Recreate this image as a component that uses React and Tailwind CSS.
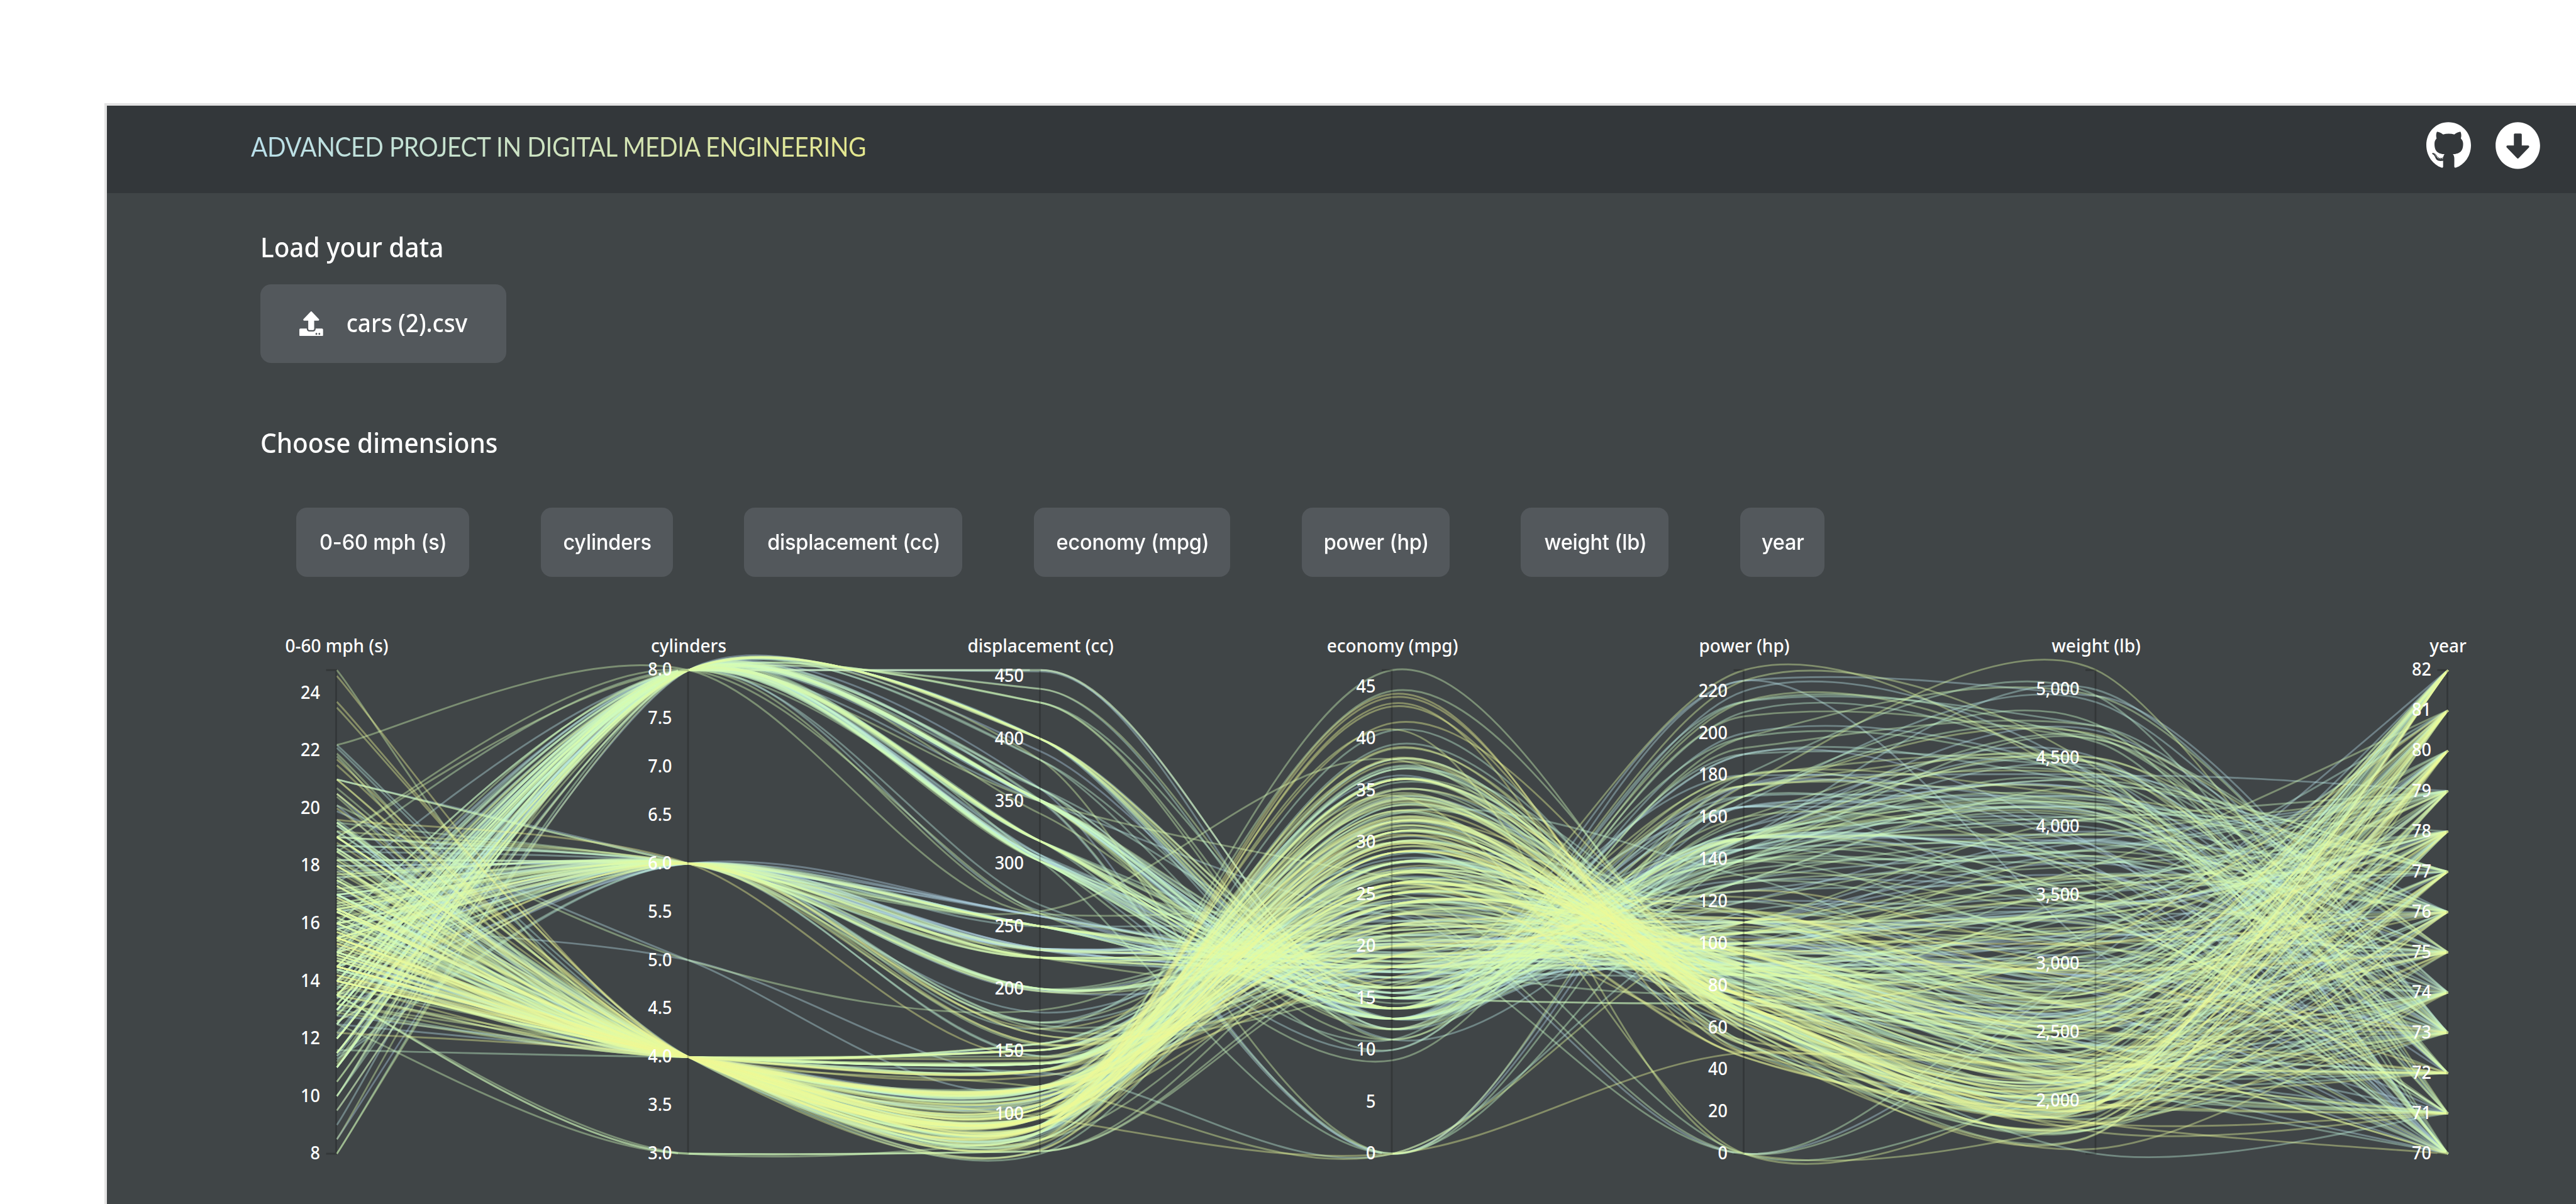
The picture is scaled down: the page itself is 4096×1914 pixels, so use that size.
import React from "react";
import { FaGithub, FaUpload, FaArrowAltCircleDown } from "react-icons/fa";

// Records per model year. Each one: make code + economy, cylinders,
// displacement, power, weight, 0-60 time. Unknown readings are stored as 0.
const CARS = {
  70: "f18 8 307 130 3504 12,d15 8 350 165 3693 11.5,v18 8 318 150 3436 11,a16 8 304 150 3433 12,l17 8 302 140 3449 10.5,l15 8 429 198 4341 10,f14 8 454 220 4354 9,v14 8 440 215 4312 8.5,w14 8 455 225 4425 10,a15 8 390 190 3850 8.5,h0 4 133 115 3090 17.5,f0 8 350 165 4142 11.5,l0 8 351 153 4034 11,v0 8 383 175 4166 10.5,a0 8 360 175 3850 11,l0 8 302 140 3353 8,j15 8 383 170 3563 10,v14 8 340 160 3609 8,f15 8 400 150 3761 9.5,d14 8 455 225 3086 10,A24 4 113 95 2372 15,v22 6 198 95 2833 15.5,a18 6 199 97 2774 15.5,l21 6 200 85 2587 16,i27 4 97 88 2130 14.5,C26 4 97 46 1835 20.5,u25 4 110 87 2672 17.5,b24 4 107 90 2430 14.5,y25 4 104 95 2375 17.5,c26 4 121 113 2234 12.5,a21 6 199 90 2648 15,l10 8 360 215 4615 14,f10 8 307 200 4376 15,j11 8 318 210 4382 13.5,m9 8 304 193 4732 18.5",
  71: "i27 4 97 88 2130 14.5,f28 4 140 90 2264 15.5,A25 4 113 95 2228 14,l25 4 98 0 2046 19,C0 4 97 48 1978 20,a19 6 232 100 2634 13,v16 6 225 105 3439 15.5,f17 6 250 100 3329 15.5,l19 6 250 88 3302 15.5,a18 6 232 100 3288 15.5,f14 8 350 165 4209 12,w14 8 400 175 4464 11.5,l14 8 351 153 4154 13.5,v14 8 318 150 4096 13,j12 8 383 180 4955 11.5,l13 8 400 170 4746 12,w13 8 400 175 5140 12,a18 6 258 110 2962 13.5,f22 4 140 72 2408 19,w19 6 250 100 3282 15,l18 6 250 88 3139 14.5,q23 4 122 86 2220 14,t28 4 116 90 2123 14,u30 4 79 70 2074 19.5,k30 4 88 76 2065 14.5,A31 4 71 65 1773 19,i35 4 72 69 1613 18,C27 4 97 60 1834 19,v26 4 91 70 1955 20.5",
  72: "A24 4 113 95 2278 15.5,j25 4 97.5 80 2126 17,C23 4 97 54 2254 23.5,f20 4 140 90 2408 19.5,l21 4 122 86 2226 16.5,f13 8 350 165 4274 12,w14 8 400 175 4385 12,v15 8 318 150 4135 13.5,l14 8 351 153 4129 13,a17 8 304 150 3672 11.5,q11 8 429 208 4633 11,d13 8 350 155 4502 13.5,s12 8 350 160 4456 13.5,g13 8 400 190 4422 12.5,o19 3 70 97 2330 13.5,a15 8 304 150 3892 12.5,f13 8 307 130 4098 14,l13 8 302 140 4294 16,v14 8 318 150 4077 14,D18 4 121 112 2933 14.5,C22 4 121 76 2511 18,u21 4 120 87 2979 19.5,x26 4 96 69 2189 18,l22 4 122 86 2395 16,i28 4 97 92 2288 17,A23 4 120 97 2506 14.5,j28 4 98 80 2164 15,A27 4 97 88 2100 16.5",
  73: "d13 8 350 175 4100 13,a14 8 304 150 3672 11.5,f13 8 350 145 3988 13,l14 8 302 137 4042 14.5,j15 8 318 150 3777 12.5,q12 8 429 198 4952 11.5,f13 8 400 150 4464 12,l13 8 351 158 4363 13,v14 8 318 150 4237 14.5,g13 8 440 215 4735 11,d12 8 455 225 4951 11,a13 8 360 175 3821 11,v18 6 225 105 3121 16.5,f16 6 250 100 3278 18,a18 6 232 100 2945 16,l18 6 250 88 3021 16.5,a23 6 198 95 2904 16,C26 4 97 46 1950 21,f11 8 400 150 4997 14,f12 8 400 167 4906 12.5,l13 8 360 170 4654 13,v12 8 350 180 4499 12.5,a18 6 232 100 2789 15,A20 4 97 88 2279 19,f21 4 140 72 2401 19.5,i22 4 108 94 2379 16.5,o18 3 70 90 2124 13.5,l19 4 122 85 2310 18.5,q21 6 155 107 2472 14,k26 4 98 90 2265 15.5,f15 8 350 145 4082 13,w16 8 400 230 4278 9.5,k29 4 68 49 1867 19.5,t24 4 116 75 2158 15.5,b20 4 114 91 2582 14,D19 4 121 112 2868 15.5,j15 8 318 150 3399 11,y24 4 121 110 2660 14,A20 6 156 122 2807 13.5,s11 8 350 180 3664 11",
  74: "v20 6 198 95 3102 16.5,l21 6 200 0 2875 17,a19 6 232 100 2901 16,f15 6 250 100 3336 17,i31 4 79 67 1950 19,l26 4 122 80 2451 16.5,A32 4 71 65 1836 21,f25 4 140 75 2542 17,f16 6 250 100 3781 17,a16 6 258 110 3632 18,v18 6 225 105 3613 16.5,l16 8 302 140 4141 14,d13 8 350 150 4699 14.5,j14 8 318 150 4457 13.5,l14 8 302 140 4638 16,a14 8 304 150 4257 15.5,b29 4 98 83 2219 16.5,C26 4 79 67 1963 15.5,t26 4 97 78 2300 14.5,A31 4 76 52 1649 16.5,i32 4 83 61 2003 19,j28 4 90 75 2125 14.5,k24 4 90 75 2108 15.5,k26 4 116 75 2246 14,n24 4 120 97 2489 15,z26 4 108 93 2391 15.5,k31 4 79 67 2000 16",
  75: "v19 6 225 95 3264 16,w18 6 250 105 3459 16,q15 6 250 72 3432 21,l15 6 250 72 3158 19.5,w16 8 400 170 4668 11.5,f15 8 350 145 4440 14,v16 8 318 150 4498 14.5,l14 8 351 148 4657 13.5,d17 6 231 110 3907 21,f16 6 250 105 3897 18.5,a15 6 258 110 3730 19,v18 6 225 95 3785 19,d21 6 231 110 3039 15,f20 8 262 110 3221 13.5,l13 8 302 129 3169 12,A29 4 97 75 2171 16,f23 4 140 83 2639 17,a20 6 232 100 2914 16,w23 4 140 78 2592 18.5,A24 4 134 96 2702 13.5,C25 4 90 71 2223 16.5,i24 4 119 97 2545 17,l18 6 171 97 2984 14.5,C29 4 90 70 1937 14,a19 6 232 90 3211 17,b23 4 115 95 2694 15,u23 4 120 88 2957 17,D22 4 121 98 2945 14.5,y25 4 121 115 2671 13.5,n33 4 91 53 1795 17.5",
  76: "k28 4 107 86 2464 15.5,t25 4 116 81 2220 16.9,e25 4 140 92 2572 14.9,x27 4 101 83 2202 15.3,f17.5 8 305 140 4215 13,j16 8 318 150 4190 13,a15.5 8 304 120 3962 13.9,l14.5 8 351 152 4215 12.8,v22 6 225 100 3233 15.4,f22 6 250 105 3353 14.5,l24 6 200 81 3012 17.6,a22.5 6 232 90 3085 17.6,f29 4 85 52 2035 22.2,f24.5 4 98 60 2164 22.1,C29 4 90 70 1937 14.2,n33 4 91 53 1795 17.4,j20 6 225 100 3651 17.7,l18 6 250 78 3574 21,w18.5 6 250 110 3645 16.2,a17.5 6 258 95 3193 17.8,C29.5 4 97 71 1825 12.2,A28 4 97 75 2155 16.4,i32 4 85 70 1990 17,l26.5 4 140 72 2565 13.6,D20 4 130 102 3150 15.7,v13 8 318 150 3940 13.2,u19 4 120 88 3270 21.9,A19 6 156 108 2930 15.5,p16.5 6 168 120 3820 16.7,e16.5 8 350 180 4380 12.1,f13 8 350 145 4055 12,l13 8 302 130 3870 15,j13 8 318 150 3755 14",
  77: "n31.5 4 98 68 2045 18.5,d30 4 111 80 2155 14.8,x36 4 79 58 1825 18.6,v25.5 4 122 96 2300 15.5,i33.5 4 85 70 1945 16.8,f17.5 8 305 145 3880 12.5,s17 8 260 110 4060 19,j15.5 8 318 145 4140 13.7,q15 8 302 130 4295 14.9,f17.5 6 250 110 3520 16.4,d20.5 6 231 105 3425 16.9,v19 6 225 100 3630 17.7,l18.5 6 250 98 3525 19,w16 8 400 180 4220 11.1,f15.5 8 350 170 4165 11.4,g15.5 8 400 190 4325 12.2,l16 8 351 149 4335 14.5,C29 4 97 78 1940 14.5,w24.5 4 151 88 2740 16,A26 4 97 75 2265 18.2,l25.5 4 140 89 2755 15.8,f30.5 4 98 63 2051 17,j33.5 4 98 83 2075 15.9,z30 4 97 67 1985 16.4,C30.5 4 97 78 2190 14.1,i22 6 146 97 2815 14.5,c21.5 4 121 110 2600 12.8,o21.5 3 80 110 2720 13.5",
  78: "C43.1 4 90 48 1985 21.5,l36.1 4 98 66 1800 14.4,o32.8 4 78 52 1985 19.4,i39.4 4 85 70 2070 18.6,n36.1 4 91 60 1800 16.4,s19.9 8 260 110 3365 15.5,j19.4 8 318 140 3735 13.2,q20.2 8 302 139 3570 12.8,w19.2 6 231 105 3535 19.2,f20.5 6 200 95 3155 18.2,l20.2 6 200 85 2965 15.8,l25.1 4 140 88 2720 15.4,v20.5 6 225 100 3430 17.2,a19.4 6 232 90 3210 17.2,d20.6 6 231 105 3380 15.8,q20.8 6 200 85 3070 16.7,j18.6 6 225 110 3620 18.7,a18.1 6 258 120 3410 15.1,f19.2 8 305 145 3425 13.2,d17.7 6 231 165 3445 13.4,l18.1 8 302 139 3205 11.2,j17.5 8 318 140 4080 13.7,f30 4 98 68 2155 16.5,A27.5 4 134 95 2560 14.2,i27.2 4 119 97 2300 14.7,j30.9 4 105 75 2230 14.5,A21.1 4 134 95 2515 14.8,v23.2 4 156 105 2745 16.7,s23.8 4 151 85 2855 17.6,i23.9 4 119 97 2405 14.9,b20.3 5 131 103 2830 15.9,D17 6 163 125 3140 13.6,y21.6 4 121 115 2795 15.7,u16.2 6 163 133 3410 15.8,C31.5 4 89 71 1990 14.9,n29.5 4 98 68 2135 16.6",
  79: "w21.5 6 231 115 3245 15.4,q19.8 6 200 85 2990 18.2,l22.3 4 140 88 2890 17.3,a20.2 6 232 90 3265 18.2,v20.6 6 225 110 3360 16.6,f17 8 305 130 3840 15.4,l17.6 8 302 129 3725 13.4,j18.2 8 318 135 3830 15.2,q16.5 8 351 138 3955 13.2,g18.5 8 360 150 3940 13,d16.9 8 350 155 4360 14.9,l15.5 8 351 142 4054 14.3,f19.2 8 267 125 3605 15,C31.9 4 89 71 1925 14,o34.1 4 86 65 1975 15.2,j35.7 4 98 80 1915 14.4,a27.4 4 121 80 2670 15,p25.4 5 183 77 3530 20.1,e23 8 350 125 3900 17.4,u27.2 4 141 71 3190 24.8,s23.9 8 260 90 3420 22.2,v34.2 4 105 70 2200 13.2,v34.5 4 105 70 2150 14.9,i31.8 4 85 65 2020 19.2,k37.3 4 91 69 2130 14.7,d28.4 4 151 90 2670 16,f28.8 6 173 115 2595 11.3,s26.8 6 173 115 2700 12.9,w33.5 4 151 90 2556 13.2",
  80: "C41.5 4 98 76 2144 14.7,A38.1 4 89 60 1968 18.8,f32.1 4 98 70 2120 15.5,i37.2 4 86 65 2019 16.4,f28 4 151 90 2678 16.5,l26.4 4 140 88 2870 18.1,a24.3 4 151 90 3003 20.1,j19.1 6 225 90 3381 18.7,b34.3 4 97 78 2188 15.8,A29.8 4 134 90 2711 15.5,o31.3 4 120 75 2542 17.5,i37 4 119 92 2434 15,A32.2 4 108 75 2265 15.2,o46.6 4 86 65 2110 17.9,j27.9 4 156 105 2800 14.4,i40.8 4 85 65 2110 19.2,C44.3 4 90 48 2085 21.7,C43.4 4 90 48 2335 23.7,b36.4 5 121 67 2950 19.9,p30 4 146 67 3250 21.8,n44.6 4 91 67 1850 13.8,x40.9 4 85 0 1835 17.3,z33.8 4 97 67 2145 18,C29.8 4 89 62 1845 15.3,i32.7 6 168 132 2910 11.4,o23.7 3 70 100 2420 12.5,B35 4 122 88 2500 15.1,l23.6 4 140 0 2905 14.3,n32.4 4 107 72 2290 17",
  81: "v27.2 4 135 84 2490 15.7,d26.6 4 151 84 2635 16.4,j25.8 4 156 92 2620 14.4,f23.5 6 173 110 2725 12.6,v30 4 135 84 2385 12.9,A39.1 4 79 58 1755 16.9,v39 4 86 64 1875 16.4,n35.1 4 81 60 1760 16.1,z32.3 4 97 67 2065 17.8,i37 4 85 65 1975 19.4,A37.7 4 89 62 2050 17.3,o34.1 4 91 68 1985 16,v34.7 4 105 63 2215 14.9,l34.4 4 98 65 2045 16.2,q29.9 4 98 65 2380 20.7,C33 4 105 74 2190 14.2,x34.5 4 100 0 2320 15.8,n33.7 4 107 75 2210 14.4,A32.4 4 108 75 2350 16.8,o32.9 4 119 100 2615 14.8,o31.6 4 120 74 2635 18.3,u28.1 4 141 80 3230 20.4,D30.7 6 145 76 3160 19.6,A25.4 6 168 116 2900 12.6,i24.2 6 146 120 2930 13.8,d22.4 6 231 110 3415 15.8,s26.6 8 350 105 3725 19,g17.6 6 225 85 3465 16.6,l20.2 6 200 88 3060 17.1,y0 4 121 110 2800 15.4",
  82: "f28 4 112 88 2605 19.6,f27 4 112 88 2640 18.6,f34 4 112 88 2395 18,w31 4 112 85 2575 16.2,j29 4 135 84 2525 16,w27 4 151 90 2735 18,l24 4 140 92 2865 16.4,a23 4 151 0 3035 20.5,C36 4 105 74 1980 15.3,o37 4 91 68 2025 18.2,o31 4 91 68 1970 17.6,v38 4 105 63 2125 14.7,q36 4 98 70 2125 17.3,r36 4 120 88 2160 14.5,n36 4 107 75 2205 14.5,A34 4 108 70 2245 16.9,n38 4 91 67 1965 15,n32 4 91 67 1965 15.7,i38 4 91 67 1995 16.2,d25 6 181 110 2945 16.4,s38 6 262 85 3015 17,g26 4 156 92 2585 14.5,l22 6 232 112 2835 14.7,A32 4 144 96 2665 13.9,j36 4 135 84 2370 13,f27 4 151 90 2950 17.3,l27 4 140 86 2790 15.6,C44 4 97 52 2130 24.6,j32 4 135 84 2295 11.6,l28 4 120 79 2625 18.6,f31 4 119 82 2720 19.4",
};

const MAKES = "abcdefghijklmnopqrstuvwxyzABCD";

const rows = Object.entries(CARS)
  .flatMap(([year, list]) =>
    list.split(",").map((rec) => {
      const [economy, cylinders, displacement, power, weight, accel] = rec
        .slice(1)
        .split(" ")
        .map(Number);
      return {
        make: MAKES.indexOf(rec[0]),
        v: [accel, cylinders, displacement, economy, power, weight, +year],
      };
    })
  )
  .sort((a, b) => a.make - b.make);

const range = (from, to, step) => {
  const out = [];
  for (let i = 0; from + i * step <= to + 1e-9; i++) out.push(from + i * step);
  return out;
};

const DIMS = [
  { name: "0-60 mph (s)", domain: [8, 24.8], ticks: range(8, 24, 2) },
  { name: "cylinders", domain: [3, 8], ticks: range(3, 8, 0.5), fmt: (t) => t.toFixed(1) },
  { name: "displacement (cc)", domain: [68, 455], ticks: range(100, 450, 50) },
  { name: "economy (mpg)", domain: [0, 46.6], ticks: range(0, 45, 5) },
  { name: "power (hp)", domain: [0, 230], ticks: range(0, 220, 20) },
  { name: "weight (lb)", domain: [1613, 5140], ticks: range(2000, 5000, 500), fmt: (t) => t.toLocaleString("en-US") },
  { name: "year", domain: [70, 82], ticks: range(70, 82, 1) },
];

// Chart geometry, in chart units (the drawing is stretched 5% vertically).
const STRETCH = 1.05;
const STEP = 559.5;
const LEFT = 365.5;
const TOP = 75.5;
const HEIGHT = 768.8 / STRETCH;

const xAt = (i) => LEFT + i * STEP;
const yAt = (i, v) => {
  const [lo, hi] = DIMS[i].domain;
  return TOP + HEIGHT * (1 - (v - lo) / (hi - lo));
};

const STOPS = [
  [0, 176, 208, 230],
  [0.2, 184, 232, 226],
  [0.42, 202, 254, 206],
  [0.65, 212, 252, 182],
  [0.85, 228, 252, 160],
  [1, 241, 248, 148],
];

function colorAt(t) {
  let k = 1;
  while (k < STOPS.length - 1 && t > STOPS[k][0]) k++;
  const a = STOPS[k - 1];
  const b = STOPS[k];
  const f = (t - a[0]) / (b[0] - a[0]);
  const c = [1, 2, 3].map((j) => Math.round(a[j] + (b[j] - a[j]) * f));
  return `rgb(${c.join(",")})`;
}

// Hermite interpolation with monotone-style tangents.
function curve(p) {
  const n = p.length - 1;
  const slope = (a, b) => (b[1] - a[1]) / (b[0] - a[0]);
  const m = [];
  let d = slope(p[0], p[1]);
  m[0] = d;
  for (let i = 1; i < n; i++) {
    const next = slope(p[i], p[i + 1]);
    m[i] = (d + next) / 2;
    d = next;
  }
  m[n] = d;
  for (let i = 0; i < n; i++) {
    d = slope(p[i], p[i + 1]);
    if (Math.abs(d) < 1e-6) {
      m[i] = m[i + 1] = 0;
    } else {
      const a = m[i] / d;
      const b = m[i + 1] / d;
      let s = a * a + b * b;
      if (s > 9) {
        s = (d * 3) / Math.sqrt(s);
        m[i] = s * a;
        m[i + 1] = s * b;
      }
    }
  }
  const t = p.map((_, i) => {
    const s = (p[Math.min(n, i + 1)][0] - p[Math.max(0, i - 1)][0]) / (6 * (1 + m[i] * m[i]));
    return [s, m[i] * s];
  });
  const f = (v) => v.toFixed(1);
  let path = `M${f(p[0][0])},${f(p[0][1])}`;
  for (let i = 1; i <= n; i++) {
    path += `C${f(p[i - 1][0] + t[i - 1][0])},${f(p[i - 1][1] + t[i - 1][1])} ${f(p[i][0] - t[i][0])},${f(p[i][1] - t[i][1])} ${f(p[i][0])},${f(p[i][1])}`;
  }
  return path;
}

const FONT = "font-['Noto_Sans',sans-serif]";

function ParallelCoordinates() {
  return (
    <svg
      className={`block h-[925px] w-[3926px] shrink-0 ${FONT}`}
      viewBox="0 0 3926 880.95"
      preserveAspectRatio="none"
    >
      <g fill="none" strokeWidth="2.8" strokeOpacity="0.4">
        {rows.map((r, i) => (
          <path
            key={i}
            d={curve(r.v.map((v, k) => [xAt(k), yAt(k, v)]))}
            stroke={colorAt(i / (rows.length - 1))}
          />
        ))}
      </g>
      {DIMS.map((dim, i) => (
        <g key={dim.name} transform={`translate(${xAt(i)},0)`}>
          <path
            d={`M-17,${TOP}H-1V${TOP + HEIGHT}H-17`}
            fill="none"
            stroke="#000"
            strokeOpacity="0.2"
            strokeWidth="2.8"
          />
          <text y="48.5" textAnchor="middle" fontSize="28" fontWeight="500" fill="#fff">
            {dim.name}
          </text>
          {dim.ticks.map((t) => (
            <text key={t} x="-26.5" y={yAt(i, t) + 8.6} textAnchor="end" fontSize="27" fontWeight="500" fill="#fff">
              {dim.fmt ? dim.fmt(t) : t}
            </text>
          ))}
        </g>
      ))}
    </svg>
  );
}

const CHIPS = [
  ["0-60 mph (s)", "w-[275.5px]"],
  ["cylinders", "w-[210px]"],
  ["displacement (cc)", "w-[347px]"],
  ["economy (mpg)", "w-[312.5px]"],
  ["power (hp)", "w-[235px]"],
  ["weight (lb)", "w-[235px]"],
  ["year", "w-[133.5px]"],
];

export default function App() {
  return (
    <div className="h-[1914px] w-[4096px] overflow-hidden bg-white pl-[166px] pt-[164px]">
      <div className={`h-[1750px] w-[3930px] overflow-hidden border-l-4 border-t-4 border-[#e3e3e3] bg-[#404547] text-white ${FONT}`}>
        <header className="flex h-[139px] items-start justify-between bg-[#33373a] pl-[229px] pr-[56px]">
          <h1 className="mt-[35px] h-[60px] origin-left scale-y-[1.07] whitespace-nowrap bg-gradient-to-r from-[#b9dfea] to-[#e4e68c] bg-clip-text font-['Lato',sans-serif] text-[39px] leading-[60px] tracking-[-0.45px] text-transparent">
            ADVANCED PROJECT IN DIGITAL MEDIA ENGINEERING
          </h1>
          <div className="mt-[25px] flex gap-[38px]">
            <FaGithub className="h-[76.7px] w-[71px]" preserveAspectRatio="none" />
            <FaArrowAltCircleDown className="h-[76.7px] w-[73px]" preserveAspectRatio="none" />
          </div>
        </header>

        <section className="pl-[244px]">
          <h2 className="mt-[54px] h-[64px] origin-left scale-y-[1.07] text-[40.5px] font-medium leading-[64px]">Load your data</h2>
          <button className="mt-[27px] flex h-[125px] w-[391px] items-center rounded-[17px] bg-[#53585c] pl-[62px]">
            <FaUpload className="h-[39.5px] w-[37.7px]" preserveAspectRatio="none" />
            <span className="ml-[37px] -mt-[3px] origin-left scale-y-[1.07] whitespace-nowrap text-[37px] font-medium leading-[60px]">cars (2).csv</span>
          </button>
        </section>

        <section className="pl-[244px]">
          <h2 className="mt-[95px] h-[64px] origin-left scale-y-[1.07] text-[40.5px] font-medium leading-[64px]">Choose dimensions</h2>
          <div className="ml-[56.5px] mt-[71px] flex gap-[113.6px] font-['Inter',sans-serif]">
            {CHIPS.map(([label, width]) => (
              <div
                key={label}
                className={`flex h-[110px] shrink-0 items-center justify-center rounded-[17px] bg-[#53585c] ${width}`}
              >
                <span className="ml-[2px] scale-y-105 whitespace-nowrap text-[32.5px] font-medium leading-[48px] tracking-[-0.2px]">{label}</span>
              </div>
            ))}
          </div>
        </section>

        <div className="mt-[69px]">
          <ParallelCoordinates />
        </div>
      </div>
    </div>
  );
}
